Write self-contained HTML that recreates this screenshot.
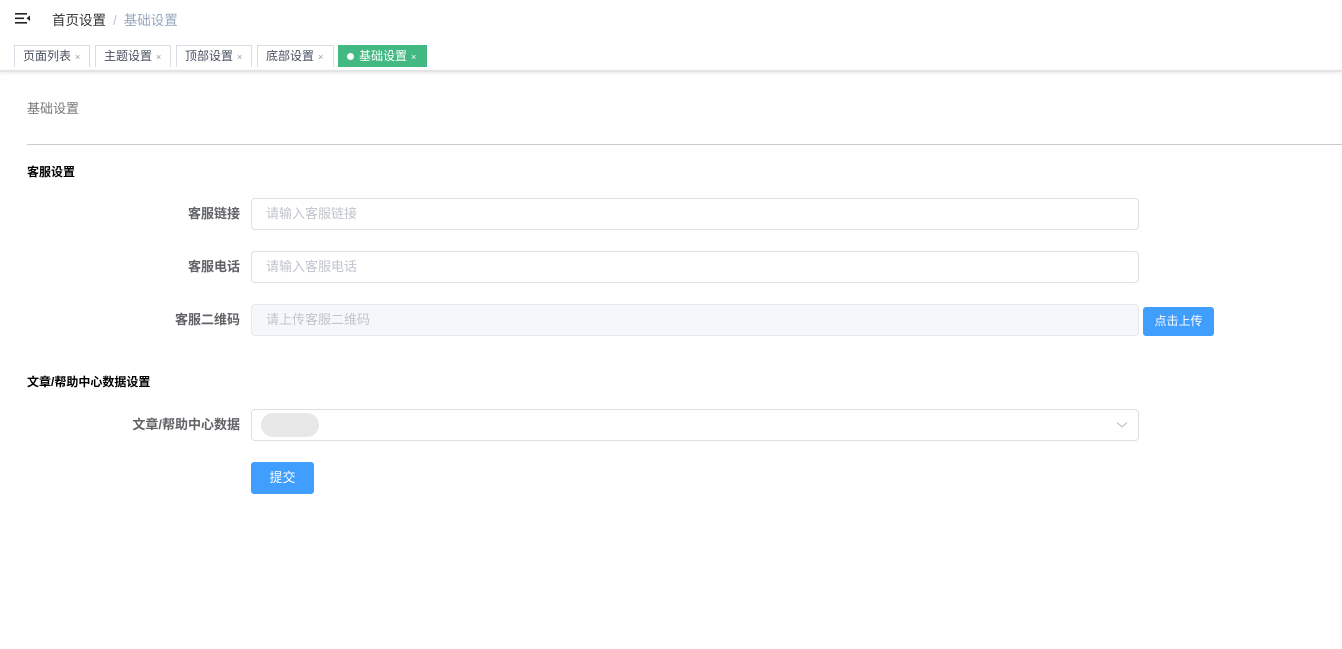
<!DOCTYPE html>
<html><head><meta charset="utf-8"><style>
*{margin:0;padding:0;box-sizing:border-box}
body{width:1342px;height:649px;background:#fff;font-family:"Liberation Sans","Noto Sans CJK SC",sans-serif;position:relative;overflow:hidden;color:#303133}
.a{position:absolute}
.tab{position:absolute;top:45px;height:22px;border:1px solid #d8dce5;border-bottom:none;font-size:12px;line-height:21px;padding-left:8px;color:#495060;background:#fff}
.tab i{font-style:normal;font-size:9px;color:#999;margin-left:4px}
.lbl{position:absolute;font-size:13px;font-weight:bold;color:#606266;text-align:right;width:240px;left:0}
.inp{position:absolute;left:251px;width:888px;height:32px;border:1px solid #dcdfe6;border-radius:4px;font-size:13px;color:#c0c4cc;padding-left:14px;line-height:30px}
</style></head><body>
<svg class="a" style="left:15px;top:12px" width="16" height="13"><rect x="0" y="1" width="12" height="1.6" fill="#222"/><rect x="0" y="5.5" width="9" height="1.6" fill="#222"/><rect x="0" y="10" width="12" height="1.6" fill="#222"/><path d="M15 3.5 L11.5 6.3 L15 9Z" fill="#222"/></svg>
<div class="a" style="left:52px;top:9px;font-size:13.5px;color:#303133">首页设置<span style="color:#c0c4cc;margin:0 7px">/</span><span style="color:#97a8be">基础设置</span></div>
<div class="a" style="left:0;top:70px;width:1342px;height:2px;background:#e4e4e4;box-shadow:0 1px 3px rgba(0,0,0,.12)"></div>
<div class="tab" style="left:14px;width:76px">页面列表<i>×</i></div>
<div class="tab" style="left:95px;width:76px">主题设置<i>×</i></div>
<div class="tab" style="left:176px;width:76px">顶部设置<i>×</i></div>
<div class="tab" style="left:257px;width:77px">底部设置<i>×</i></div>
<div class="tab" style="left:338px;width:89px;background:#42b983;border-color:#42b983;color:#fff"><span style="display:inline-block;width:7px;height:7px;border-radius:50%;background:#fff;margin-right:5px;vertical-align:0"></span>基础设置<i style="color:#fff">×</i></div>
<div class="a" style="left:27px;top:98px;font-size:13px;color:#777">基础设置</div>
<div class="a" style="left:27px;top:144px;width:1315px;height:1px;background:#ccc"></div>
<div class="a" style="left:27px;top:163px;font-size:12px;font-weight:bold;color:#000">客服设置</div>
<div class="lbl" style="top:203px">客服链接</div>
<div class="inp" style="top:198px">请输入客服链接</div>
<div class="lbl" style="top:256px">客服电话</div>
<div class="inp" style="top:251px">请输入客服电话</div>
<div class="lbl" style="top:309px">客服二维码</div>
<div class="inp" style="top:304px;background:#f5f7fa;border-color:#e4e7ed">请上传客服二维码</div>
<div class="a" style="left:1143px;top:307px;width:71px;height:29px;background:#409eff;border-radius:3px;color:#fff;font-size:12px;line-height:29px;text-align:center">点击上传</div>
<div class="a" style="left:27px;top:373px;font-size:12px;font-weight:bold;color:#000">文章/帮助中心数据设置</div>
<div class="lbl" style="top:414px">文章/帮助中心数据</div>
<div class="inp" style="top:409px"><span style="position:absolute;left:9px;top:3px;width:58px;height:24px;border-radius:12px;background:#e8e8e8"></span><svg style="position:absolute;right:10px;top:11px" width="12" height="8"><path d="M1 1.5 L6 6 L11 1.5" stroke="#c0c4cc" fill="none" stroke-width="1.2"/></svg></div>
<div class="a" style="left:251px;top:462px;width:63px;height:32px;background:#409eff;border-radius:3px;color:#fff;font-size:13px;line-height:32px;text-align:center">提交</div>
</body></html>
